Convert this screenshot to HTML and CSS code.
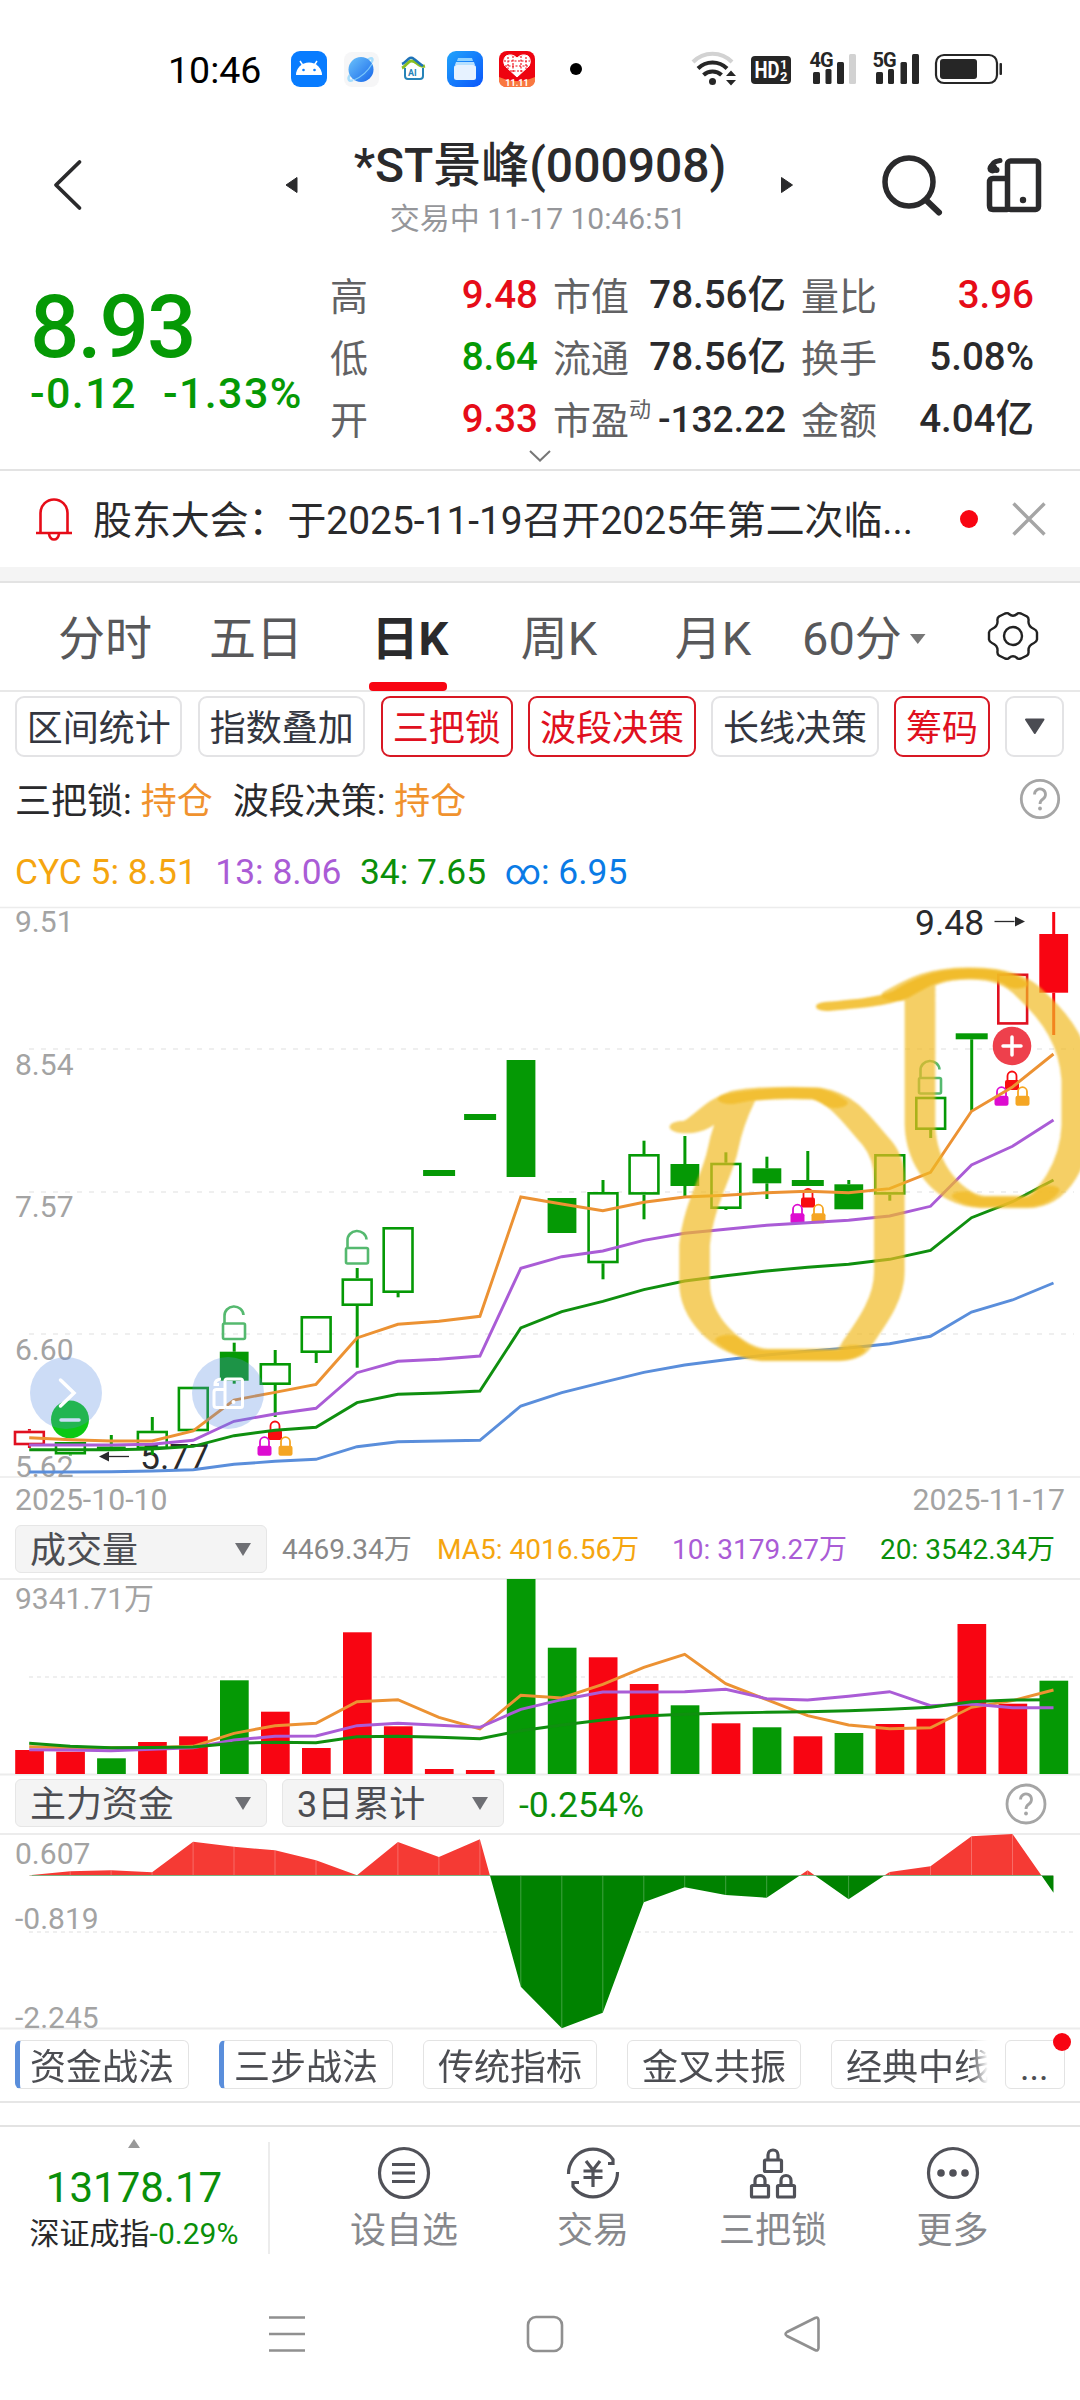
FILE: index.html
```html
<!DOCTYPE html>
<html lang="zh-CN">
<head>
    <meta charset="UTF-8">
    <meta name="viewport" content="width=device-width, initial-scale=1.0">
    <title>*ST景峰(000908)</title>
    <link rel="stylesheet" href="styles.css">
</head>
<body>
    <!-- System status bar -->
    <div class="statusbar">
        <span class="clock">10:46</span>
        <svg class="apps" width="300" height="60" viewBox="284 40 300 60">
            <defs>
                <linearGradient id="gPlanet" x1="0" y1="0" x2="1" y2="1">
                    <stop offset="0" stop-color="#6cc3fb"/><stop offset="1" stop-color="#1766ea"/>
                </linearGradient>
                <linearGradient id="gFile" x1="0" y1="0" x2="1" y2="1">
                    <stop offset="0" stop-color="#20a4fb"/><stop offset="1" stop-color="#0a55fb"/>
                </linearGradient>
            </defs>
            <rect x="291" y="51" width="36" height="36" rx="9" fill="#087cff"/>
            <path d="M296 75a13 12.500 0 0 1 26 0z" fill="#fff"/>
            <path d="M300 61l4 6M317 61l-4 6" stroke="#fff" stroke-width="1.500"/>
            <circle cx="303.500" cy="70" r="1.300" fill="#087cff"/><circle cx="314.500" cy="70" r="1.300" fill="#087cff"/>
            <rect x="344" y="52" width="35" height="35" rx="8" fill="#f6f6f7"/>
            <path d="M368 59.500c5-3 6 0 2 4.500M350 75c-3 4-1 7 3 5" fill="none" stroke="#a8defc" stroke-width="2.500"/>
            <circle cx="361" cy="69.500" r="12.500" fill="url(#gPlanet)"/>
            <path d="M372 64c-4 7-11 13-18 16" fill="none" stroke="#7cc8fa" stroke-width="1.200"/>
            <path d="M405 68v8q0 3 3 3h12q3 0 3-3v-8" fill="none" stroke="#2683b8" stroke-width="2"/>
            <path d="M402 68c5-2 6-10 13-6 4 3 6 5 10 4" fill="none" stroke="#8abf22" stroke-width="3"/>
            <path d="M402 64c5-2 7-9 12-5 4 3 6 5 9 7" fill="none" stroke="#1d72b8" stroke-width="2.500"/>
            <text x="408" y="76" class="tiny-ai">AI</text>
            <rect x="447" y="51" width="36" height="36" rx="9" fill="url(#gFile)"/>
            <path d="M458 58h14l1 3h-16z" fill="#8fd2ff"/><path d="M456 62h18l1 3h-20z" fill="#b5e0ff"/>
            <rect x="454" y="65" width="22" height="15" rx="2.500" fill="#e6f2ff"/>
            <rect x="499" y="51" width="36" height="36" rx="8" fill="#ee0310"/>
            <path d="M499 77q18 8 36 0v4q-1 6-8 6h-20q-7 0-8-6z" fill="#f97840"/>
            <path d="M517 77l-12-11q-3-6 1-10 6-3 11 2 5-5 11-2 4 4 1 10z" fill="#fff" stroke="#fff"/>
            <path d="M508 57v12M513 56v16M521 56v16M526 57v12M504 61h26M505 66h24M510 71h14" stroke="#ee0310" stroke-width="1.100" stroke-dasharray="2 1.500"/>
            <text x="517" y="86" class="tiny-11">11.11</text>
            <circle cx="576" cy="69" r="6" fill="#000"/>
        </svg>
        <svg class="signals" width="330" height="60" viewBox="680 40 330 60">
            <g fill="none" stroke="#262626" stroke-width="4">
                <path d="M693 62a27 27 0 0 1 39 0" stroke="#d2d2d2"/>
                <path d="M698 68.500a20.500 20.500 0 0 1 29 0"/>
                <path d="M703.500 75a13 13 0 0 1 18 0"/>
            </g>
            <circle cx="712.500" cy="81.500" r="3.500" fill="#262626"/>
            <path d="M731 70.500l5 5.500h-10zM731 85.500l5-5.500h-10z" fill="#262626"/>
            <rect x="751" y="56" width="40" height="28" rx="4" fill="#262626"/>
            <text x="754.500" y="77.500" class="hd" textLength="25" lengthAdjust="spacingAndGlyphs">HD</text>
            <text x="780" y="69" class="hd-n">1</text>
            <text x="780" y="81" class="hd-n">2</text>
            <text x="809.500" y="67" class="net">4G</text>
            <text x="872.500" y="67" class="net">5G</text>
            <g fill="#262626">
                <rect x="813" y="72" width="7" height="12" rx="1.500"/><rect x="825.500" y="69" width="6" height="15" rx="1.500"/>
                <rect x="837" y="62" width="7" height="22" rx="1.500"/><rect x="849" y="54" width="7" height="30" rx="1.500" fill="#d2d2d2"/>
                <rect x="876" y="72" width="7" height="12" rx="1.500"/><rect x="888" y="69" width="6" height="15" rx="1.500"/>
                <rect x="900.500" y="62" width="6.500" height="22" rx="1.500"/><rect x="912" y="54" width="7" height="30" rx="1.500"/>
                <rect x="940" y="59" width="37" height="20" rx="3"/><rect x="999.500" y="63" width="2.500" height="12" rx="1"/>
            </g>
            <rect x="936" y="55" width="61" height="28" rx="8" fill="none" stroke="#262626" stroke-width="2.200"/>
        </svg>
    </div>

    <!-- Stock title -->
    <div class="header">
        <svg width="60" height="70" viewBox="40 150 60 70"><path d="M79.500 162L56 185l23.500 23" class="ln" stroke-width="3.800"/></svg>
        <svg class="prev" width="20" height="30" viewBox="282 170 20 30"><path d="M286 185l11-7.500v15z" fill="#2a2a2c" stroke="#2a2a2c" stroke-linejoin="round"/></svg>
        <div class="title">
            <h1>*ST景峰(000908)</h1>
            <p>交易中 11-17 10:46:51</p>
        </div>
        <svg class="next" width="20" height="30" viewBox="778 170 20 30"><path d="M792.500 185l-11-7.500v15z" fill="#2a2a2c" stroke="#2a2a2c" stroke-linejoin="round"/></svg>
        <svg class="tools" width="180" height="80" viewBox="870 145 180 80">
            <circle cx="909" cy="182" r="24" class="ln" stroke-width="5.500"/>
            <path d="M927 201l12 11.500" class="ln" stroke-width="6"/>
            <rect x="1007.500" y="161" width="31" height="48.500" rx="3" class="ln" stroke-width="5.500"/>
            <path d="M1007 178.500h-14q-3.500 0-3.500 4v23q0 4 3.500 4h14" class="ln" stroke-width="5.500"/>
            <circle cx="1023" cy="200" r="3.200" fill="#2a2a2c"/>
            <path d="M1000 160.500q-9 1-9.500 9" class="ln" stroke-width="5"/><circle cx="992.500" cy="168.500" r="5" fill="#2a2a2c"/>
            <circle cx="996.500" cy="170" r="3" fill="#2a2a2c"/>
        </svg>
    </div>

    <!-- Quote -->
    <div class="quote">
        <div class="price">
            <div class="last">8.93</div>
            <div class="change"><span>-0.12</span><span>-1.33%</span></div>
        </div>
        <div class="facts">
            <span>高</span><b class="red">9.48</b><span>市值</span><b>78.56亿</b><span>量比</span><b class="red">3.96</b>
            <span>低</span><b class="green">8.64</b><span>流通</span><b>78.56亿</b><span>换手</span><b>5.08%</b>
            <span>开</span><b class="red">9.33</b><span>市盈<sup>动</sup></span><b class="pe">-132.22</b><span>金额</span><b>4.04亿</b>
        </div>
        <svg class="more-arrow" width="24" height="14" viewBox="0 0 24 14"><path d="M2 2l10 9.500L22 2" fill="none" stroke="#777" stroke-width="2"/></svg>
    </div>

    <!-- Notice -->
    <div class="notice">
        <svg width="38" height="44" viewBox="35 497 38 44">
            <path d="M40.500 532v-19a13.500 13.500 0 0 1 27 0v19M36 533h36M49 534q1 5.500 5 5.500t5-5.500" fill="none" stroke="#e60c18" stroke-width="2.600"/>
        </svg>
        <p>股东大会：于2025-11-19召开2025年第二次临...</p>
        <i class="dot"></i>
        <svg width="36" height="36" viewBox="0 0 36 36"><path d="M2.500 2.500l31 31M33.500 2.500l-31 31" fill="none" stroke="#a5a5a5" stroke-width="3.400"/></svg>
    </div>
    <div class="strip"></div>

    <!-- Period tabs -->
    <div class="tabs">
        <span>分时</span><span>五日</span><span class="active">日K</span><span>周K</span><span>月K</span>
        <span class="min">60分<svg width="16" height="11" viewBox="0 0 16 11"><path d="M0 0h15.500L7.800 10z" fill="#777"/></svg></span>
        <svg class="gear" width="54" height="54" viewBox="-27 -27 54 54">
            <path d="M-8-22.500Q-5-23.500-4-22 0-18.500 4-22 5-23.500 8-22.500L14-19.500Q16-18 15.500-15 15-9.500 21-7 23.500-6 24-3.500V3.500Q23.500 6 21 7 15 9.500 15.500 15 16 18 14 19.500L8 22.500Q5 23.500 4 22 0 18.500-4 22-5 23.500-8 22.500L-14 19.500Q-16 18-15.500 15-15 9.500-21 7-23.500 6-24 3.500V-3.500Q-23.500-6-21-7-15-9.500-15.500-15-16-18-14-19.500Z" fill="none" stroke="#222" stroke-width="2.400"/>
            <circle r="9" fill="none" stroke="#222" stroke-width="2.400"/>
        </svg>
    </div>

    <div class="chips">
        <span>区间统计</span><span>指数叠加</span><span class="on">三把锁</span><span class="on">波段决策</span><span>长线决策</span><span class="on">筹码</span>
        <span class="drop"><svg width="22" height="18" viewBox="0 0 22 18"><path d="M2 1.500h17.500L10.800 15z" fill="#4a4b52" stroke="#4a4b52" stroke-width="2" stroke-linejoin="round"/></svg></span>
    </div>

    <div class="signal">
        <span>三把锁: <em>持仓</em></span><span>波段决策: <em>持仓</em></span>
        <svg class="help" width="42" height="42" viewBox="-21 -21 42 42"><circle r="18.700" fill="none" stroke="#a5a5a5" stroke-width="2.800"/><path d="M-5.500-4.500a5.500 5.500 0 1 1 8.500 4.500q-3 2-3 5" fill="none" stroke="#a5a5a5" stroke-width="2.800"/><circle cy="9.500" r="1.900" fill="#a5a5a5"/></svg>
    </div>

    <div class="cyc">
        <span class="c5">CYC 5: 8.51</span><span class="c10">13: 8.06</span><span class="c20">34: 7.65</span><span class="call">∞: 6.95</span>
    </div>

    <!-- Daily candles -->
    <svg class="chart" id="kline" width="1080" height="580" viewBox="0 900 1080 580">
        <defs>
            <g id="unlock" fill="none" stroke="#55b96f" stroke-width="2.600">
                <rect x="-11" y="0" width="22" height="15.500" rx="1.500"/>
                <path d="M-9.500 0v-7.500a9.500 9 0 0 1 19-1"/>
            </g>
            <g id="lock">
                <path d="M-4.500 1v-5a4.500 4.500 0 0 1 9 0v5" fill="none" stroke="currentColor" stroke-width="1.800"/>
                <rect x="-7" y="0" width="14" height="10" rx="2" fill="currentColor"/>
            </g>
            <g id="locks">
                <use href="#lock" x="0" y="0" color="#f80c10"/>
                <use href="#lock" x="-10.500" y="15.700" color="#dd0cd0"/>
                <use href="#lock" x="10.500" y="15.700" color="#f5a623"/>
            </g>
            <filter id="soft" x="-5%" y="-5%" width="110%" height="110%"><feGaussianBlur stdDeviation="1.200"/></filter>
        </defs>
        <path d="M0 907.500h1080M0 1477h1080" stroke="#ececec" stroke-width="1.500"/>
        <path d="M29 1049h1045M29 1192h1045M29 1334h1045" stroke="#efefef" stroke-width="2" stroke-dasharray="5 7"/>
        <g class="axis">
            <text x="15" y="932">9.51</text><text x="15" y="1075">8.54</text><text x="15" y="1217">7.57</text>
            <text x="15" y="1359.500">6.60</text><text x="15" y="1476.500">5.62</text>
        </g>
        <text x="140" y="1469" class="mark">5.77</text>
        <path d="M109 1456.500h20" stroke="#2a2a2c" stroke-width="1.300"/><path d="M99 1456.500l10-5v10z" fill="#2a2a2c"/>
        <text x="915" y="935" class="mark">9.48</text>
        <path d="M994.500 921.500h20" stroke="#2a2a2c" stroke-width="1.300"/><path d="M1025 921.500l-10-5v10z" fill="#2a2a2c"/>
        <g id="candles"></g>
        <use href="#unlock" x="234" y="1323.500"/><use href="#unlock" x="357" y="1248"/><use href="#unlock" x="930" y="1078"/>
        <use href="#locks" x="275" y="1430"/><use href="#locks" x="808" y="1197.500"/><use href="#locks" x="1012" y="1080"/>
        <circle cx="70" cy="1419.500" r="19" fill="#0cc814"/><path d="M61 1420h18" stroke="#fff" stroke-width="3.500" stroke-linecap="round"/>
        <circle cx="1012" cy="1046" r="19.300" fill="#ee404c"/><path d="M1003 1046h18M1012 1037v18" stroke="#fff" stroke-width="3.500" stroke-linecap="round"/>
        <g id="klines"></g>
        <!-- floating buttons -->
        <g fill="rgba(85,140,225,.3)"><circle cx="66" cy="1393" r="36"/><circle cx="228" cy="1393" r="36"/></g>
        <path d="M60.500 1380l13.500 13-13.500 13" fill="none" stroke="#fff" stroke-width="3.500" stroke-linecap="round"/>
        <g fill="none" stroke="#fff" stroke-width="3">
            <rect x="225" y="1379" width="17.500" height="28.500" rx="2"/>
            <path d="M225 1389.500h-8.500q-2.500 0-2.500 2.500v13q0 2.500 2.500 2.500h8.500M221 1379q-6 .5-6 5.500h4"/>
        </g>
        <circle cx="233.500" cy="1402" r="2" fill="#fff"/>
        <!-- marker strokes: flat-nib pen, so the path is drawn in a horizontally stretched space -->
        <g filter="url(#soft)" fill="none" stroke="#f1ba22" stroke-width="12.500" stroke-linecap="round" stroke-linejoin="round">
            <g transform="scale(2.450 1)">
                <path opacity=".7" d="M279.500 1127C287 1128 291 1105 302 1096Q313 1092 333 1093.500C345 1098 351 1125 358 1143Q363 1158 363 1180V1272C363 1300 355 1325 350 1343Q348 1354.500 342 1355H312C297 1352 283 1318 283.500 1280V1245C285 1205 293 1175 295 1150Q297 1125 302 1100"/>
                <path opacity=".7" d="M366 995C377 980 382 974 395 973.500C409 973 416 982 421 995C432 1020 438.500 1045 439.500 1080V1125C439 1160 430 1202 419 1202H401C387 1200 376 1165 375.500 1125V983"/>
                <path opacity=".75" stroke-width="10" d="M298 1099Q313 1091 333 1093.500Q337 1096 341 1103M297 1340Q304 1355 312 1355H342Q346 1355 348 1350"/>
                <path opacity=".85" stroke-width="9" d="M337.500 1006.500C350 1004 360 1002 368 994C377 981 382 974 395 973.500C404 973 411 976 415 984"/>
                <path opacity=".75" stroke-width="9" d="M393 1196Q397 1202 401 1202H419Q425 1201 428 1190"/>
            </g>
        </g>
    </svg>
    <div class="dates"><span>2025-10-10</span><span>2025-11-17</span></div>

    <!-- Volume -->
    <div class="sub-head">
        <div class="select wide">成交量<i class="tri"></i></div>
        <div class="ma"><span class="c0">4469.34万</span><span class="c5">MA5: 4016.56万</span><span class="c10">10: 3179.27万</span><span class="c20">20: 3542.34万</span></div>
    </div>
    <svg class="chart" id="volume" width="1080" height="201" viewBox="0 1575 1080 201">
        <path d="M0 1579h1080M0 1774.500h1080" stroke="#ececec" stroke-width="2"/>
        <path d="M29 1677h1045" stroke="#efefef" stroke-width="2" stroke-dasharray="4 4"/>
        <text x="15" y="1609" class="axis">9341.71万</text>
        <g id="bars"></g>
        <g id="vlines"></g>
    </svg>

    <!-- Main money flow -->
    <div class="sub-head money">
        <div class="select wide">主力资金<i class="tri"></i></div>
        <div class="select days">3日累计<i class="tri"></i></div>
        <b class="flow">-0.254%</b>
        <svg class="help" width="42" height="42" viewBox="-21 -21 42 42"><circle r="19" fill="none" stroke="#a5a5a5" stroke-width="2.800"/><path d="M-5.500-4.500a5.500 5.500 0 1 1 8.500 4.500q-3 2-3 5" fill="none" stroke="#a5a5a5" stroke-width="2.800"/><circle cy="9.500" r="1.900" fill="#a5a5a5"/></svg>
    </div>
    <svg class="chart" id="money" width="1080" height="199" viewBox="0 1832 1080 199">
        <defs>
            <clipPath id="above"><rect x="0" y="1832" width="1080" height="43.500"/></clipPath>
            <clipPath id="below"><rect x="0" y="1875.500" width="1080" height="155"/></clipPath>
        </defs>
        <path d="M0 1834h1080M0 2028.500h1080" stroke="#ececec" stroke-width="1.800"/>
        <path d="M29 1932h1045" stroke="#efefef" stroke-width="2" stroke-dasharray="4 4"/>
        <g class="axis"><text x="15" y="1864">0.607</text><text x="15" y="1928.500">-0.819</text><text x="15" y="2028">-2.245</text></g>
        <g id="flow"></g>
    </svg>

    <div class="plans">
        <div class="plan-list"><span class="mine">资金战法</span><span class="mine">三步战法</span><span>传统指标</span><span>金叉共振</span><span>经典中线</span></div>
        <span class="more">...</span>
    </div>
    <div class="gap"></div>

    <!-- Bottom toolbar -->
    <div class="toolbar">
        <div class="index">
            <svg width="14" height="11" viewBox="0 0 14 11"><path d="M7 1l6 9H1z" fill="#999"/></svg>
            <strong>13178.17</strong>
            <p>深证成指<em>-0.29%</em></p>
        </div>
        <div class="tool">
            <svg width="56" height="56" viewBox="-28 -28 56 56"><circle r="24.500" class="ic"/><path d="M-12-8.500h23M-12 0h23M-12 8.500h23" class="ic" stroke-width="3.600"/></svg>
            <span>设自选</span>
        </div>
        <div class="tool">
            <svg width="56" height="56" viewBox="-28 -28 56 56"><path d="M-24.500 1A24.500 24.500 0 0 1 20-13.500V-9.500H15M24.500-1A24.500 24.500 0 0 1-20 13.500V9.500H-14" class="ic"/><path d="M-7-12L0-3 7-12M0-3V14M-9.500-2H9.500M-9.500 4.500H9.500" class="ic" stroke-width="3.200"/></svg>
            <span>交易</span>
        </div>
        <div class="tool">
            <svg width="56" height="56" viewBox="-28 -28 56 56"><g class="ic"><rect x="-8.500" y="-13" width="17" height="11.500" rx="1"/><path d="M-5-13v-5a5 5 0 0 1 10 0v5"/><rect x="-21.500" y="12.500" width="17" height="11.500" rx="1"/><path d="M-18 12.500v-5a5 5 0 0 1 10 0v5"/><rect x="4.500" y="12.500" width="17" height="11.500" rx="1"/><path d="M8 12.500v-5a5 5 0 0 1 10 0v5"/></g></svg>
            <span>三把锁</span>
        </div>
        <div class="tool">
            <svg width="56" height="56" viewBox="-28 -28 56 56"><circle r="24.500" class="ic"/><g fill="#505158"><circle cx="-12" r="3.800"/><circle r="3.800"/><circle cx="12" r="3.800"/></g></svg>
            <span>更多</span>
        </div>
    </div>

    <!-- System navigation -->
    <div class="sysnav">
        <svg width="40" height="40" viewBox="-20 -20 40 40"><path d="M-18-16.500h36M-18 0h36M-18 16.500h36"/></svg>
        <svg width="40" height="40" viewBox="-20 -20 40 40"><rect x="-17" y="-17" width="34" height="34" rx="8"/></svg>
        <svg width="40" height="40" viewBox="-20 -20 40 40"><path d="M12-16q3-1.500 3.500 2v28q-.5 3.500-3.500 2l-28-14q-3-2 0-4z"/></svg>
    </div>

    <script>
        const GREEN = '#059905', RED = '#f80512', RED_LINE = '#e01020';
        const x = i => +(29.2 + i * 40.97).toFixed(1);

        // type (h = hollow, f = filled), wick top, body top, body bottom, wick bottom
        const candles = [
            ['hr', 1429, 1430.7, 1445.3, 1448], ['h', 1442, 1442, 1454.5, 1455.5], ['f', 1435, 1446.5, 1449, 1449],
            ['h', 1417, 1430.7, 1449, 1455], ['h', 1386.7, 1386.7, 1431.3, 1431.3], ['f', 1342.7, 1351.7, 1380.7, 1383.7],
            ['h', 1350, 1363, 1385, 1417], ['h', 1316, 1316, 1353, 1363], ['h', 1268, 1278.3, 1306, 1367.7],
            ['h', 1227, 1227, 1293, 1297.3], ['d', 1170, 1170, 1176, 1176], ['d', 1114, 1114, 1120, 1120],
            ['f', 1060, 1060, 1177, 1177], ['f', 1198, 1198, 1233, 1233], ['h', 1180, 1192, 1263.3, 1279.3],
            ['h', 1140.7, 1154, 1194.7, 1219.3], ['f', 1136, 1164, 1186, 1197], ['h', 1152.3, 1162.7, 1209, 1210],
            ['f', 1156.7, 1168.3, 1183.3, 1199], ['d', 1151, 1180, 1186, 1186], ['f', 1180, 1184.3, 1209.3, 1209.3],
            ['h', 1154, 1154, 1194.7, 1200.7], ['h', 1096.7, 1096.7, 1130, 1138], ['d', 1033.3, 1033.3, 1039.3, 1110.7],
            ['hr', 973.5, 973.5, 1024.7, 1024.7], ['fr', 912, 934, 992.7, 1035]
        ];

        let out = '';
        candles.forEach(([t, hi, top, bot, lo], i) => {
            const red = t.endsWith('r'), color = red ? (t[0] === 'h' ? RED_LINE : RED) : GREEN;
            const cx = x(i) + 0.2;
            if (hi < top) out += `<path d="M${cx} ${hi}V${top}" stroke="${color}" stroke-width="3"/>`;
            if (lo > bot) out += `<path d="M${cx} ${bot}V${lo}" stroke="${color}" stroke-width="3"/>`;
            if (t[0] === 'h') {
                out += `<rect x="${cx - 14.4}" y="${top + 1.3}" width="28.800" height="${bot - top - 2.6}" fill="none" stroke="${color}" stroke-width="2.600"/>`;
            } else {
                const w = t[0] === 'd' ? 32 : 28.8;
                out += `<rect x="${cx - w / 2}" y="${top}" width="${w}" height="${bot - top}" fill="${color}"/>`;
            }
        });
        document.getElementById('candles').innerHTML = out;

        function drawLines(id, lines, width) {
            document.getElementById(id).innerHTML = lines.map(([color, ys]) =>
                `<polyline fill="none" stroke="${color}" stroke-width="${width}" points="${ys.map((y, i) => x(i) + ',' + y).join(' ')}"/>`
            ).join('');
        }

        drawLines('klines', [
            ['#5a8edb', [1472, 1472, 1471.7, 1471, 1469.7, 1464.3, 1461.3, 1459.3, 1446.7, 1441.7, 1441, 1440.3, 1406, 1392.7, 1382.3, 1372.3, 1365, 1359.7, 1355, 1351.3, 1348, 1343.7, 1336.3, 1312, 1300, 1283]],
            ['#0f8f0f', [1449.7, 1449.7, 1449.7, 1449, 1446.3, 1435.7, 1430.3, 1427.3, 1402.7, 1394.3, 1393, 1391, 1328, 1311.7, 1301.3, 1289.7, 1281, 1275.7, 1271, 1267.3, 1264.3, 1259.3, 1250.3, 1217.7, 1201.7, 1180]],
            ['#aa5cd6', [1445, 1445, 1445, 1444.3, 1440.3, 1421.3, 1414, 1408.3, 1372.7, 1361.3, 1359.3, 1356, 1268.3, 1256.7, 1251, 1240.3, 1233.3, 1229.3, 1225.3, 1222.7, 1220.3, 1216, 1206.3, 1165, 1146.3, 1120]],
            ['#ec9233', [1437.7, 1439.7, 1441, 1441, 1431, 1400, 1392.3, 1384.3, 1338, 1324.3, 1321.3, 1316.3, 1197, 1204, 1210.7, 1202.3, 1197, 1195.3, 1192.7, 1191.3, 1192.7, 1188.7, 1172.3, 1111.3, 1087, 1054]]
        ], 2.9);

        // bar tops, the base line is 1774
        const bars = [1750, 1751.7, 1758.3, 1742, 1736.3, 1680.3, 1711.7, 1748, 1632.3, 1726.3, 1769, 1770, 1579, 1647.7, 1657.3, 1684, 1705.3, 1723.3, 1727.3, 1736.3, 1733, 1724, 1718.7, 1624, 1703.7, 1680.7];
        const down = [2, 5, 12, 13, 16, 18, 20, 25];
        document.getElementById('bars').innerHTML = bars.map((y, i) =>
            `<rect x="${x(i) - 14}" y="${y}" width="28.700" height="${1774 - y}" fill="${down.includes(i) ? GREEN : RED}"/>`
        ).join('');

        drawLines('vlines', [
            ['#ec9233', [1746.7, 1747.7, 1747.7, 1747.7, 1746.3, 1733.3, 1725.7, 1723.3, 1701.7, 1699.7, 1717.3, 1729, 1695.3, 1698, 1684.3, 1667.3, 1654.3, 1683.7, 1699.7, 1715.7, 1725, 1728.7, 1727.7, 1707.3, 1700.7, 1690]],
            ['#aa5cd6', [1749.7, 1750, 1750.7, 1749.3, 1747.7, 1740, 1736.3, 1736, 1725.7, 1723.3, 1725.3, 1727.3, 1709.3, 1699.7, 1692, 1692, 1691.7, 1689.3, 1698.7, 1700, 1696.3, 1691.7, 1705.7, 1704, 1707.7, 1707.7]],
            ['#0f8f0f', [1743.3, 1746.3, 1747.7, 1747.5, 1747, 1743.3, 1742.3, 1742.7, 1736.7, 1736.3, 1737.3, 1738.7, 1730.7, 1725, 1720, 1716, 1714.3, 1713, 1712.3, 1711.7, 1710.7, 1709.3, 1707.3, 1701.7, 1700, 1699.7]]
        ], 2.9);

        const flow = [1875.3, 1871.3, 1870.3, 1872.3, 1841.7, 1846.7, 1850.3, 1860.3, 1875.3, 1842, 1857, 1839.3, 1986.7, 2028.3, 2012.7, 1902.3, 1887.3, 1895, 1897.7, 1870.3, 1899.3, 1872, 1866.3, 1836.3, 1834, 1892.7];
        const area = x(0) + ',1875.5 ' + flow.map((y, i) => x(i) + ',' + y).join(' ') + ' ' + x(25) + ',1875.5';
        let seams = '';
        flow.forEach((y, i) => {
            if (i < 25) seams += `<path d="M${x(i)} 1875.500V${y}" stroke="#fff" stroke-opacity=".25"/>`;
        });
        document.getElementById('flow').innerHTML =
            `<polygon points="${area}" fill="#f53a34" clip-path="url(#above)"/>` +
            `<polygon points="${area}" fill="#008200" clip-path="url(#below)"/>` + seams +
            '<path d="M32 1875.500H1053" stroke="#7fae7f" stroke-width="1"/>';
    </script>
</body>
</html>
```
FILE: styles.css
```css
* {
    box-sizing: border-box;
}
body {
    margin: 0;
    width: 1080px;
    height: 2400px;
    overflow: hidden;
    background: #fff;
    color: #2a2a2c;
    font-family: Roboto, "Noto Sans CJK SC", sans-serif;
    font-size: 36px;
    line-height: 1;
    display: flex;
    flex-direction: column;
}
body > * {
    flex-shrink: 0;
}
h1, p {
    margin: 0;
}
em, i {
    font-style: normal;
}
svg {
    display: block;
    flex-shrink: 0;
}
.red { color: #e60c18; }
.green { color: #059905; }
.c0 { color: #888; }
.c5 { color: #f5a50f; }
.c10 { color: #aa5cd6; }
.c20 { color: #0a8f0a; }
.call { color: #0a7be6; }

/* status bar */
.statusbar {
    height: 130px;
    padding: 40px 0 0 168px;
    display: flex;
}
.clock {
    width: 116px;
    height: 60px;
    line-height: 61px;
    font-size: 37.500px;
    color: #000;
}
.signals {
    margin-left: 96px;
}
.tiny-ai { font: 700 9px Roboto, sans-serif; fill: #2683b8; }
.tiny-11 { font: 700 9px Roboto, sans-serif; fill: #fff; text-anchor: middle; }
.hd { font: 700 23px Roboto, sans-serif; fill: #fff; }
.hd-n { font: 700 13px Roboto, sans-serif; fill: #fff; }
.net { font: 700 20px Roboto, sans-serif; fill: #262626; letter-spacing: -1px; }

/* title */
.header {
    height: 130px;
    padding-left: 40px;
    display: flex;
    align-items: flex-start;
}
.header > svg { margin-top: 20px; }
.ln {
    fill: none;
    stroke: #2a2a2c;
    stroke-linecap: round;
    stroke-linejoin: round;
}
.header > .prev, .header > .next { margin-top: 40px; }
.prev { margin-left: 182px; }
.title {
    width: 476px;
    text-align: center;
}
.title h1 {
    margin-top: 6px;
    font-size: 48px;
    font-weight: 500;
    line-height: 60px;
}
.title p {
    font-size: 30px;
    line-height: 36px;
    margin: 5px 4px 0 0;
    color: #95969a;
}
.header > .tools { margin: 15px 0 0 72px; }

/* quote */
.quote {
    height: 211px;
    padding-left: 30px;
    display: flex;
    position: relative;
    border-bottom: 2px solid #e3e3e3;
}
.price {
    width: 300px;
    color: #059905;
    font-weight: 500;
}
.last {
    margin-top: 22px;
    font-size: 87px;
    line-height: 90px;
    letter-spacing: -2px;
}
.change {
    font-size: 43px;
    line-height: 44px;
    display: flex;
    gap: 26px;
    margin-top: -1px;
    letter-spacing: 1.400px;
}
.facts {
    display: grid;
    grid-template-columns: 60px 148px 98px 150px 98px 150px;
    grid-template-rows: repeat(3, 62px);
    margin-top: 4px;
    align-items: center;
    height: 186px;
    font-size: 38.500px;
    white-space: nowrap;
}
.facts span {
    color: #626264;
    font-size: 38px;
    padding-top: 4px;
}
.facts span:nth-child(6n + 3), .facts span:nth-child(6n + 5) { padding-left: 15px; }
.facts b {
    font-weight: 500;
    text-align: right;
}
.facts .pe { font-size: 37px; }
.facts sup {
    font-size: 22px;
    line-height: 0;
    vertical-align: 17px;
}
.more-arrow {
    position: absolute;
    left: 528px;
    top: 189px;
}

/* notice */
.notice {
    height: 96px;
    padding: 0 33px 0 35px;
    display: flex;
    align-items: center;
}
.notice p {
    margin-left: 20px;
    width: 867px;
    padding-top: 4px;
    font-size: 38.900px;
    white-space: nowrap;
}
.dot {
    width: 18px;
    height: 18px;
    border-radius: 50%;
    background: #f80512;
    margin-right: 33px;
}
.strip {
    height: 16px;
    background: #f4f4f4;
    border-bottom: 2px solid #e3e3e3;
}

/* tabs */
.tabs {
    height: 109px;
    padding-left: 30px;
    border-bottom: 2px solid #e8e8e8;
    display: grid;
    grid-template-columns: 150px 152px 160px 134px 174px 188px 54px;
    font-size: 47px;
    line-height: 112px;
    text-align: center;
    color: #58585a;
}
.tabs .active {
    color: #2a2a2c;
    font-weight: 700;
    position: relative;
    padding-right: 4px;
}
.tabs .active::after {
    content: "";
    position: absolute;
    left: 37px;
    bottom: 4px;
    width: 78px;
    height: 9px;
    border-radius: 4px;
    background: #f80512;
}
.min {
    display: flex;
    align-items: center;
    gap: 8px;
    padding-left: 2px;
}
.gear { margin: 26px 0 0 -2px; }

/* option chips */
.chips {
    height: 69px;
    padding: 4px 0 0 15px;
    display: flex;
    gap: 15.700px;
}
.chips span {
    height: 61px;
    padding: 2px 9.700px 0;
    border: 2px solid #e3e3e5;
    border-radius: 9px;
    line-height: 59px;
    color: #33363f;
}
.chips .on {
    color: #e01020;
    border-color: #d81824;
}
.chips .drop {
    width: 59px;
    display: flex;
    align-items: center;
    padding: 0 0 0 17px;
}

.signal {
    height: 76px;
    padding: 3px 19px 0 15px;
    display: flex;
    align-items: center;
    gap: 20px;
}
.signal span { padding-top: 2px; }
.signal .help { margin: -3px 0 0 auto; }

.signal em { color: #f0922e; }

.cyc {
    height: 63px;
    padding-left: 15px;
    display: flex;
    font-size: 35.400px;
    line-height: 71px;
    gap: 18.500px;
}

/* charts */
.chart {
    overflow: visible;
}
.axis {
    font-size: 30px;
    fill: #a3a3a3;
}
.mark {
    font-size: 35.500px;
    fill: #2a2a2c;
}
.dates {
    height: 42px;
    padding: 4px 15px 0 15px;
    display: flex;
    justify-content: space-between;
    font-size: 30.200px;
    color: #a3a3a3;
    line-height: 31px;
}
.sub-head {
    height: 53px;
    padding: 3px 33px 0 15px;
    display: flex;
}
.select {
    height: 48px;
    flex-shrink: 0;
    padding: 4px 15px 0 14px;
    border: 1px solid #e6e6e6;
    border-radius: 6px;
    background: #f4f4f4;
    color: #4c4d52;
    line-height: 46px;
    display: flex;
    justify-content: space-between;
    align-items: center;
}
.select.wide { width: 252px; }
.select.days {
    width: 222px;
    margin-left: 15px;
}
.tri {
    border: 8px solid transparent;
    border-top: 13px solid #6e6f74;
    border-bottom: 0;
    margin-top: -4px;
}
.ma {
    margin-left: 15px;
    display: grid;
    grid-template-columns: 155px 235px 208px auto;
    font-size: 28px;
    line-height: 50px;
    white-space: nowrap;
}
.money {
    height: 56px;
    padding-top: 3px;
}
.flow {
    margin-left: 15px;
    color: #0a8f0a;
    font-size: 35.500px;
    font-weight: 400;
    line-height: 53px;
}
.money .help { margin: 4px 0 0 auto; }

/* strategy chips */
.plans {
    height: 72px;
    padding: 9px 0 0 15px;
    display: flex;
    border-bottom: 2px solid #e6e6e6;
}
.plan-list {
    width: 975px;
    overflow: hidden;
    display: flex;
    gap: 30.500px;
    -webkit-mask-image: linear-gradient(90deg, #000 955px, transparent 973px);
    mask-image: linear-gradient(90deg, #000 955px, transparent 973px);
}
.plans span {
    flex-shrink: 0;
    height: 49px;
    padding: 3px 13.500px 0 14px;
    border: 1px solid #e3e3e3;
    border-radius: 6px;
    line-height: 48px;
    color: #4c4d52;
}
.plans .mine {
    border-left: 5px solid #5a8edb;
    padding-left: 10px;
}
.plans .more {
    position: relative;
    width: 60px;
    margin-left: 15px;
}
.more::after {
    content: "";
    position: absolute;
    right: -7px;
    top: -8px;
    width: 18px;
    height: 18px;
    border-radius: 50%;
    background: #f80512;
}
.gap {
    height: 24px;
    border-bottom: 2px solid #e3e3e3;
}

/* toolbar */
.toolbar {
    height: 140px;
    display: grid;
    grid-template-columns: 309px 190px 188px 172px 187px;
}
.index {
    width: 270px;
    height: 112px;
    margin-top: 15px;
    border-right: 2px solid #ececec;
    display: flex;
    flex-direction: column;
    align-items: center;
}
.index svg { margin-top: -4px; }
.index strong {
    font-size: 42px;
    font-weight: 400;
    line-height: 48px;
    margin-top: 15px;
    color: #0a8f0a;
}
.index p {
    font-size: 30px;
    line-height: 36px;
    margin-top: 4px;
}
.index em { color: #0a8f0a; }
.tool {
    display: flex;
    flex-direction: column;
    align-items: center;
    padding-top: 18px;
    color: #87888c;
}
.tool span { margin-top: 12px; }
.ic {
    fill: none;
    stroke: #505158;
    stroke-width: 3.200;
}

.sysnav {
    display: flex;
    justify-content: center;
    gap: 218px;
    padding: 47px 0 0 9px;
}
.sysnav svg {
    fill: none;
    stroke: #909090;
    stroke-width: 2.600;
}
```
